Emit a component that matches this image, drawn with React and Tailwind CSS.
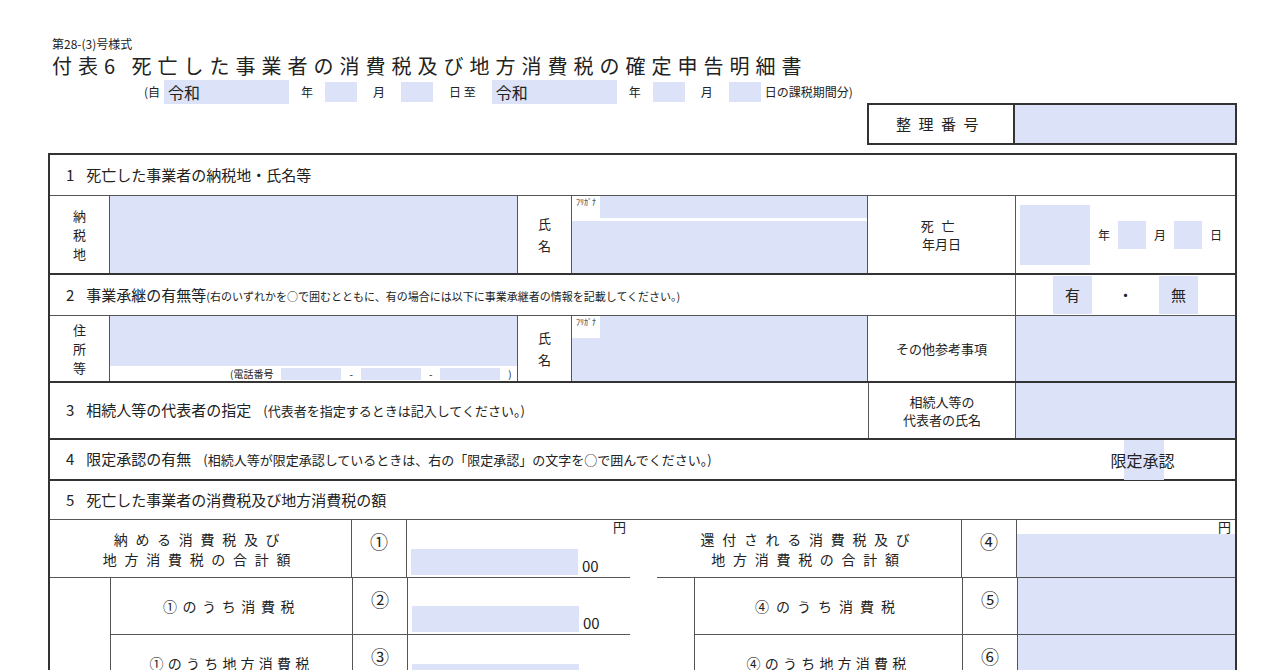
import React from 'react';

const blue = 'bg-[#dce2f7]';
const font = { fontFamily: '"Noto Sans CJK JP", "Liberation Serif", serif' };

function Circ({ n }) {
  return <div className="w-[55px] shrink-0 border-r border-[#555] flex items-start justify-center pt-2 text-[18px]">{n}</div>;
}

function Amount({ yen, zero }) {
  return (
    <div className="flex-1 flex flex-col">
      <div className="h-[14px] text-right pr-1 text-[13px] leading-[14px]">{yen ? '円' : ''}</div>
      <div className="flex-1 flex items-end pb-0.5">
        <div className={`${blue} h-[26px] w-[167px] ml-1`} />
        {zero && <span className="ml-1 text-[15px] leading-none pb-0.5">00</span>}
      </div>
    </div>
  );
}

export default function App() {
  return (
    <div className="w-[1280px] h-[670px] overflow-hidden bg-white text-[#222]" style={font}>
      <div className="pl-[52px] pt-[36px]">
        <div className="text-[12px] leading-[16px]">第28-(3)号様式</div>
        <div className="text-[20px] leading-[28px] tracking-[0.3em]">付表6 死亡した事業者の消費税及び地方消費税の確定申告明細書</div>
        <div className="flex items-center text-[12px] h-[24px] pl-[92px] gap-1">
          <span>(自</span>
          <span className={`${blue} w-[125px] text-[16px] pl-1`}>令和</span><span className="mx-2">年</span>
          <span className={`${blue} w-[32px] h-[20px]`} /><span className="mx-3">月</span>
          <span className={`${blue} w-[32px] h-[20px]`} /><span className="mx-3">日 至</span>
          <span className={`${blue} w-[125px] text-[16px] pl-1`}>令和</span><span className="mx-2">年</span>
          <span className={`${blue} w-[32px] h-[20px]`} /><span className="mx-3">月</span>
          <span className={`${blue} w-[32px] h-[20px]`} /><span>日の課税期間分)</span>
        </div>
      </div>
      <div className="flex justify-end pr-[43px] mt-[-1px]">
        <div className="flex border-2 border-[#333] h-[42px] w-[370px]">
          <div className="w-[146px] border-r-2 border-[#333] flex items-center justify-center text-[15px] tracking-[0.5em]">整理番号</div>
          <div className={`${blue} flex-1`} />
        </div>
      </div>

      <div className="ml-[48px] w-[1189px] mt-[8px] border-2 border-b-0 border-[#333] text-[14px]">
        <div className="h-[41px] flex items-center pl-4 gap-3 border-b border-[#555] text-[15px]"><span>1</span>死亡した事業者の納税地・氏名等</div>
        <div className="h-[79px] flex border-b-2 border-[#333]">
          <div className="w-[60px] border-r border-[#555] flex flex-col items-center justify-center text-[13px] leading-[19px]"><span>納</span><span>税</span><span>地</span></div>
          <div className={`${blue} w-[408px] border-r border-[#555]`} />
          <div className="w-[54px] border-r border-[#555] flex flex-col items-center justify-center text-[13px] leading-[22px]"><span>氏</span><span>名</span></div>
          <div className="w-[296px] border-r border-[#555] flex flex-col">
            <div className="h-[22px] flex"><span className="text-[8px] px-1 bg-white">ﾌﾘｶﾞﾅ</span><div className={`${blue} flex-1`} /></div>
            <div className={`${blue} flex-1 mt-[3px]`} />
          </div>
          <div className="w-[148px] border-r border-[#555] flex flex-col items-center justify-center text-[13px] leading-[18px]"><span className="tracking-[0.6em]">死亡</span><span>年月日</span></div>
          <div className="flex-1 flex items-center text-[12px] gap-2 pl-1">
            <div className={`${blue} w-[70px] h-[60px]`} />年<div className={`${blue} w-[28px] h-[28px]`} />月<div className={`${blue} w-[28px] h-[28px]`} />日
          </div>
        </div>
        <div className="h-[41px] flex border-b border-[#555]">
          <div className="w-[966px] border-r border-[#555] flex items-center pl-4 gap-3 text-[15px]"><span>2</span><span>事業承継の有無等<span className="text-[11px]">(右のいずれかを○で囲むとともに、有の場合には以下に事業承継者の情報を記載してください。)</span></span></div>
          <div className="flex-1 flex items-center justify-around text-[15px] px-6">
            <span className={`${blue} px-3 py-2`}>有</span><span>・</span><span className={`${blue} px-3 py-2`}>無</span>
          </div>
        </div>
        <div className="h-[67px] flex border-b-2 border-[#333]">
          <div className="w-[60px] border-r border-[#555] flex flex-col items-center justify-center text-[13px] leading-[19px]"><span>住</span><span>所</span><span>等</span></div>
          <div className="w-[408px] border-r border-[#555] flex flex-col">
            <div className={`${blue} flex-1`} />
            <div className="h-[15px] flex items-center text-[10px] pl-[120px] gap-2">(電話番号<span className={`${blue} w-[60px] h-[12px]`} />-<span className={`${blue} w-[60px] h-[12px]`} />-<span className={`${blue} w-[60px] h-[12px]`} />)</div>
          </div>
          <div className="w-[54px] border-r border-[#555] flex flex-col items-center justify-center text-[13px] leading-[22px]"><span>氏</span><span>名</span></div>
          <div className="w-[296px] border-r border-[#555] flex flex-col">
            <div className="h-[22px] flex"><span className="text-[8px] px-1 bg-white">ﾌﾘｶﾞﾅ</span><div className={`${blue} flex-1`} /></div>
            <div className={`${blue} flex-1`} />
          </div>
          <div className="w-[148px] border-r border-[#555] flex items-center justify-center text-[13px]">その他参考事項</div>
          <div className={`${blue} flex-1`} />
        </div>
        <div className="h-[57px] flex border-b-2 border-[#333]">
          <div className="w-[818px] flex items-center pl-4 gap-3 text-[15px]"><span>3</span>相続人等の代表者の指定<span className="text-[13px]">(代表者を指定するときは記入してください。)</span></div>
          <div className="w-[148px] border-l border-r border-[#555] flex flex-col items-center justify-center text-[13px] leading-[18px]"><span>相続人等の</span><span>代表者の氏名</span></div>
          <div className={`${blue} flex-1`} />
        </div>
        <div className="h-[41px] flex items-center border-b-2 border-[#333]">
          <div className="w-[1000px] pl-4 flex gap-3 items-center text-[15px]"><span>4</span>限定承認の有無<span className="text-[13px]">(相続人等が限定承認しているときは、右の「限定承認」の文字を○で囲んでください。)</span></div>
          <div className="flex-1 flex justify-center text-[16px]"><span className="bg-[linear-gradient(90deg,transparent_25%,#dce2f7_25%,#dce2f7_80%,transparent_80%)] px-1 py-2">限定承認</span></div>
        </div>
        <div className="h-[39px] flex items-center pl-4 gap-3 border-b border-[#555] text-[15px]"><span>5</span>死亡した事業者の消費税及び地方消費税の額</div>
        <div className="flex">
          <div className="w-[580px] flex flex-col">
            <div className="h-[58px] flex border-b border-[#555]">
              <div className="w-[302px] border-r border-[#555] flex flex-col justify-center items-center text-[14px] leading-[20px] tracking-[0.55em]"><span>納める消費税及び</span><span>地方消費税の合計額</span></div>
              <Circ n="①" /><Amount yen zero />
            </div>
            <div className="h-[57px] flex border-b border-[#555] ml-[60px] border-l">
              <div className="w-[242px] border-r border-[#555] flex items-center justify-center text-[14px] tracking-[0.4em]">①のうち消費税</div>
              <Circ n="②" /><Amount zero />
            </div>
            <div className="h-[57px] flex ml-[60px] border-l border-[#555]">
              <div className="w-[242px] border-r border-[#555] flex items-center justify-center text-[14px] tracking-[0.3em]">①のうち地方消費税</div>
              <Circ n="③" /><Amount zero />
            </div>
          </div>
          <div className="w-[27px]" />
          <div className="flex-1 flex flex-col">
            <div className="h-[58px] flex border-b border-[#555]">
              <div className="w-[305px] border-r border-[#555] flex flex-col justify-center items-center text-[14px] leading-[20px] tracking-[0.55em]"><span>還付される消費税及び</span><span>地方消費税の合計額</span></div>
              <Circ n="④" />
              <div className="flex-1 flex flex-col"><div className="h-[14px] text-right pr-1 text-[13px] leading-[14px]">円</div><div className={`${blue} flex-1`} /></div>
            </div>
            <div className="h-[57px] flex border-b border-[#555] ml-[37px] border-l">
              <div className="w-[268px] border-r border-[#555] flex items-center justify-center text-[14px] tracking-[0.5em]">④のうち消費税</div>
              <Circ n="⑤" /><div className={`${blue} flex-1`} />
            </div>
            <div className="h-[57px] flex ml-[37px] border-l border-[#555]">
              <div className="w-[268px] border-r border-[#555] flex items-center justify-center text-[14px] tracking-[0.3em]">④のうち地方消費税</div>
              <Circ n="⑥" /><div className={`${blue} flex-1`} />
            </div>
          </div>
        </div>
      </div>
    </div>
  );
}
